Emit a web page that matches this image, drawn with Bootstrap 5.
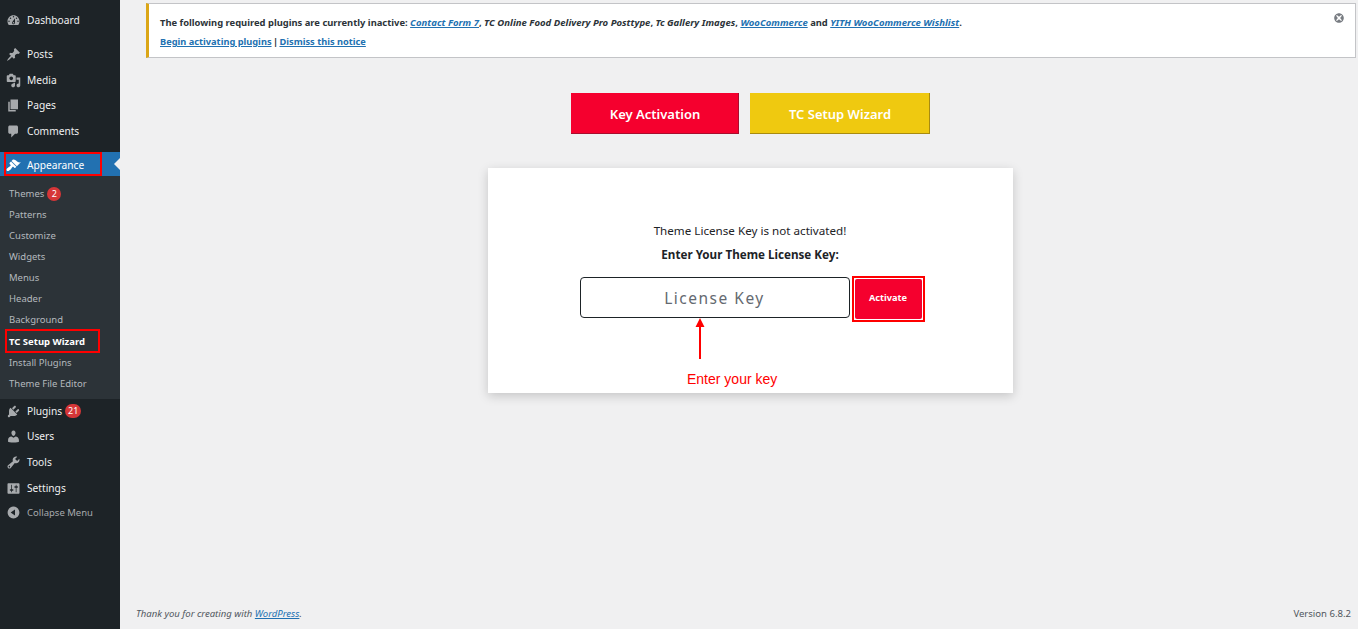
<!DOCTYPE html>
<html lang="en">
<head>
<meta charset="utf-8">
<title>TC Setup Wizard</title>
<link href="https://cdn.jsdelivr.net/npm/bootstrap@5.3.0/dist/css/bootstrap.min.css" rel="stylesheet">
<style>
html,body{height:100%;overflow:hidden}
body{background:#f0f0f1;font-family:"Noto Sans",sans-serif;color:#3c434a;font-size:10px}
.wp-shell{height:629px}
.wp-side{width:120px;flex:none;background:#1d2327;padding-top:8px}
.wp-menu{margin:0;padding:0;list-style:none}
.wp-item{height:25.7px;display:flex;align-items:center;color:#f0f0f1;font-size:10.2px;position:relative;white-space:nowrap}
.wp-item svg{width:15px;height:15px;fill:#a7aaad;margin-left:6px;margin-right:6px;flex:none}
.wp-gap{margin-top:8px}
.wp-current{background:#2271b1;color:#fff;height:24px;margin-top:8px;padding-top:2px}
.wp-current svg{fill:#fff}
.wp-current::after{content:"";position:absolute;right:0;top:6px;border:6px solid transparent;border-right-color:#f0f0f1;border-left:0}
.wp-short{height:24px}
.wp-tall{height:26.6px}
.wp-sub{background:#2c3338;padding:7px 0 5px;list-style:none;margin:0}
.wp-sub li{height:21.1px;display:flex;align-items:center;padding-left:9px;color:#b4b9be;font-size:9.5px;position:relative;white-space:nowrap}
.wp-sub li.wp-on{color:#fff;font-weight:700}
.wp-count{background:#d63638;color:#fff;border-radius:8px;font-size:9px;min-width:14px;height:14px;line-height:14px;text-align:center;padding:0 2px;margin-left:3px}
.wp-count-w{min-width:16px}
.wp-collapse{color:#a7aaad;font-size:9.5px;height:23px}
.wp-collapse svg{fill:#a7aaad}
.red-box{position:absolute;border:2px solid #f00;pointer-events:none}
.box-app{left:4px;top:0;width:98px;height:24px}
.box-tc{left:5px;top:-2px;width:95px;height:24px}
.wp-main{flex:1;min-width:0}
.wp-wrap{margin:3px 2px 0 26px}
.wp-notice{height:55px;background:#fff;border:1px solid #c3c4c7;border-left:3px solid #dba617;padding:0 11px;position:relative;font-size:9.4px;font-weight:700;color:#2c3338}
.wp-notice p{margin:0}
.wp-notice a{color:#2271b1}
.wp-notice .rq{font-style:italic;font-size:9.55px}
.wp-line1{margin-top:7px!important;line-height:24px}
.wp-line2{line-height:14px;font-size:9.25px}
.wp-sep{margin:0 -1px}
.wp-x{position:absolute;right:10px;top:8px;width:12px;height:12px;fill:#787c82}
.wp-center{padding-right:2px}
.tab-btn{width:168px;height:41px;border-radius:0;color:#fff;font-size:13px;font-weight:600;border:0;border-right:1px solid;border-bottom:1px solid;padding:3px 0 0 2px}
.tab-red,.tab-red:hover{background:#f5002e;border-color:#a80d2e;color:#fff}
.tab-yel,.tab-yel:hover{background:#efc910;border-color:#a88b10;color:#fff;width:180px}
.tab-row{margin-top:35px;gap:11px}
.key-card{width:525px;height:225px;margin-top:34px;background:#fff;box-shadow:0 3px 10px rgba(0,0,0,.18);padding-top:52px;position:relative;color:#1d2327;font-size:11.65px}
.key-card p{margin:0;text-align:center;line-height:20px}
.key-card p:first-child{padding-top:1px}
.key-b{font-weight:700;margin-top:4px!important}
.key-row{margin:11px 0 0 92px;gap:2px;align-items:flex-start;height:46px}
.key-input{width:270px;height:41px;margin-top:1px;border:1px solid #1d2327;border-radius:4px;text-align:center;font-size:15.5px;letter-spacing:1.5px;color:#646970;padding:0;background:#fff;box-shadow:none}
.key-input::placeholder{color:#646970;opacity:1}
.key-act{border:2px solid #f00;padding:1px;width:73px;height:46px}
.key-act .btn{width:100%;height:100%;background:#f5002e;color:#fff;font-size:9.2px;font-weight:700;border:0;border-radius:2px;padding:0 0 2px}
.key-arrow{position:absolute;left:206px;top:150px;width:12px;height:41px}
.key-label{position:absolute;left:199.500px;top:202px;font-family:"Liberation Sans",sans-serif;color:#f00;font-size:14px;line-height:18px}
.wp-foot{height:30px;padding:0 7px 0 16px;font-size:9.55px;color:#50575e}
.wp-foot a{color:#2271b1}
</style>
</head>
<body>
<div class="wp-shell d-flex">
  <aside class="wp-side">
    <ul class="wp-menu">
      <li class="wp-item"><svg viewBox="0 0 20 20"><path d="M3.76 16h12.48c1.1-1.37 1.76-3.11 1.76-5 0-4.42-3.58-8-8-8s-8 3.58-8 8c0 1.89.66 3.63 1.76 5zM10 4c.55 0 1 .45 1 1s-.45 1-1 1-1-.45-1-1 .45-1 1-1zM6 6c.55 0 1 .45 1 1s-.45 1-1 1-1-.45-1-1 .45-1 1-1zm8 0c.55 0 1 .45 1 1s-.45 1-1 1-1-.45-1-1 .45-1 1-1zm-5.37 5.55L12 7v6c0 1.1-.9 2-2 2s-2-.9-2-2c0-.57.24-1.08.63-1.45zM4 10c.55 0 1 .45 1 1s-.45 1-1 1-1-.45-1-1 .45-1 1-1zm12 0c.55 0 1 .45 1 1s-.45 1-1 1-1-.45-1-1 .45-1 1-1zm-5 3c0-.55-.45-1-1-1s-1 .45-1 1 .45 1 1 1 1-.45 1-1z"/></svg>Dashboard</li>
      <li class="wp-item wp-gap"><svg viewBox="0 0 20 20"><path d="M10.44 3.02l1.82-1.82 6.36 6.35-1.83 1.82c-1.05-.68-2.48-.57-3.41.36l-.75.75c-.92.93-1.04 2.35-.35 3.41l-1.83 1.82-2.41-2.41-2.8 2.79c-.42.42-3.38 2.71-3.8 2.29s1.86-3.39 2.28-3.81l2.79-2.79L4.1 9.36l1.83-1.82c1.05.69 2.48.57 3.4-.36l.75-.75c.93-.92 1.05-2.35.36-3.41z"/></svg>Posts</li>
      <li class="wp-item"><svg viewBox="0 0 20 20"><path d="M13 11V4c0-.55-.45-1-1-1h-1.67L9 1H5L3.67 3H2c-.55 0-1 .45-1 1v7c0 .55.45 1 1 1h10c.55 0 1-.45 1-1zM7 4.5c1.38 0 2.5 1.12 2.5 2.5S8.38 9.5 7 9.5 4.5 8.38 4.5 7 5.62 4.5 7 4.5zM14 6h5v10.5c0 1.38-1.12 2.5-2.5 2.5S14 17.88 14 16.5s1.12-2.5 2.5-2.5c.17 0 .34.02.5.05V9h-3V6zm-4 8.05V13h2v3.5c0 1.38-1.12 2.5-2.5 2.5S7 17.88 7 16.5 8.12 14 9.5 14c.17 0 .34.02.5.05z"/></svg>Media</li>
      <li class="wp-item"><svg viewBox="0 0 20 20"><path d="M6 15V2h10v13H6zm-1 1h8v2H3V5h2v11z"/></svg>Pages</li>
      <li class="wp-item"><svg viewBox="0 0 20 20"><path d="M5 2h9c1.1 0 2 .9 2 2v7c0 1.1-.9 2-2 2h-2l-5 5v-5H5c-1.1 0-2-.9-2-2V4c0-1.1.9-2 2-2z"/></svg>Comments</li>
      <li class="wp-item wp-current"><svg viewBox="0 0 20 20"><path d="M14.48 11.06L7.41 3.99l1.5-1.5c.5-.56 2.3-.47 3.51.32 1.21.8 1.43 1.28 2.91 2.1 1.18.64 2.45 1.26 4.45.85zm-.71.71L6.7 4.7 4.93 6.47c-.39.39-.39 1.02 0 1.41l1.06 1.06c.39.39.39 1.03 0 1.42-.6.6-1.43 1.11-2.21 1.69-.35.26-.7.53-1.01.84C1.43 13.23 0 15 1 17c1.99 1 3.77-.43 5.1-1.77.31-.31.58-.66.84-1.01.58-.78 1.09-1.61 1.69-2.21.39-.39 1.02-.39 1.41 0l1.06 1.06c.39.39 1.02.39 1.41 0z"/></svg>Appearance<span class="red-box box-app"></span></li>
    </ul>
    <ul class="wp-sub">
      <li>Themes<span class="wp-count">2</span></li>
      <li>Patterns</li>
      <li>Customize</li>
      <li>Widgets</li>
      <li>Menus</li>
      <li>Header</li>
      <li>Background</li>
      <li class="wp-on">TC Setup Wizard<span class="red-box box-tc"></span></li>
      <li>Install Plugins</li>
      <li>Theme File Editor</li>
    </ul>
    <ul class="wp-menu">
      <li class="wp-item wp-short"><svg viewBox="0 0 20 20"><path d="M13.11 4.36L9.87 7.6 8 5.73l3.24-3.24c.35-.34 1.05-.2 1.56.32.52.51.66 1.21.31 1.55zm-8 1.77l.91-1.12 9.01 9.01-1.19.84c-.71.71-2.63 1.16-3.82 1.16H6.14L4.9 17.26c-.59.59-1.54.59-2.12 0-.59-.58-.59-1.53 0-2.12l1.24-1.24v-3.88c0-1.13.4-3.19 1.09-3.89zm7.26 3.97l3.24-3.24c.34-.35 1.04-.21 1.55.31.52.51.66 1.21.31 1.55l-3.24 3.25z"/></svg>Plugins<span class="wp-count wp-count-w">21</span></li>
      <li class="wp-item wp-tall"><svg viewBox="0 0 20 20"><path d="M10 9.25c-2.27 0-2.73-3.44-2.73-3.44C7 4.02 7.82 2 9.97 2c2.16 0 2.98 2.02 2.71 3.81 0 0-.41 3.44-2.68 3.44zm0 2.57L12.72 10c2.39 0 4.52 2.33 4.52 4.53v2.49s-3.65 1.13-7.24 1.13c-3.65 0-7.24-1.13-7.24-1.13v-2.49c0-2.25 1.94-4.48 4.47-4.48z"/></svg>Users</li>
      <li class="wp-item"><svg viewBox="0 0 20 20"><path d="M16.68 9.77c-1.34 1.34-3.3 1.67-4.95.99l-5.41 6.52c-.99.99-2.59.99-3.58 0s-.99-2.59 0-3.57l6.52-5.42c-.68-1.65-.35-3.61.99-4.95 1.28-1.28 3.12-1.62 4.72-1.06l-2.89 2.89 2.82 2.82 2.86-2.87c.53 1.58.18 3.39-1.08 4.65zM3.81 16.21c.4.39 1.04.39 1.43 0 .4-.4.4-1.04 0-1.43-.39-.4-1.03-.4-1.43 0-.39.39-.39 1.03 0 1.43z"/></svg>Tools</li>
      <li class="wp-item"><svg viewBox="0 0 20 20"><path d="M18 16V4c0-.55-.45-1-1-1H3c-.55 0-1 .45-1 1v12c0 .55.45 1 1 1h14c.55 0 1-.45 1-1zM8 11h1c.55 0 1 .45 1 1s-.45 1-1 1H8v1.5c0 .28-.22.5-.5.5s-.5-.22-.5-.5V13H6c-.55 0-1-.45-1-1s.45-1 1-1h1V5.5c0-.28.22-.5.5-.5s.5.22.5.5V11zm5-2h-1c-.55 0-1-.45-1-1s.45-1 1-1h1V5.5c0-.28.22-.5.5-.5s.5.22.5.5V7h1c.55 0 1 .45 1 1s-.45 1-1 1h-1v5.5c0 .28-.22.5-.5.5s-.5-.22-.5-.5V9z"/></svg>Settings</li>
      <li class="wp-item wp-collapse"><svg viewBox="0 0 20 20"><path d="M10 2.16c4.33 0 7.84 3.51 7.84 7.84s-3.51 7.84-7.84 7.84S2.16 14.33 2.16 10 5.71 2.16 10 2.16zm2 11.72V6.12L6.18 9.97z"/></svg>Collapse Menu</li>
    </ul>
  </aside>
  <main class="wp-main d-flex flex-column">
    <div class="wp-wrap flex-grow-1">
      <div class="wp-notice">
        <p class="wp-line1">The following required plugins are currently inactive: <a href="#" class="rq">Contact Form 7</a>, <span class="rq">TC Online Food Delivery Pro Posttype</span>, <span class="rq">Tc Gallery Images</span>, <a href="#" class="rq">WooCommerce</a> and <a href="#" class="rq">YITH WooCommerce Wishlist</a>.</p>
        <p class="wp-line2"><a href="#">Begin activating plugins</a> <span class="wp-sep">|</span> <a href="#">Dismiss this notice</a></p>
        <svg class="wp-x" viewBox="0 0 20 20"><path d="M10 2c4.42 0 8 3.58 8 8s-3.58 8-8 8-8-3.58-8-8 3.58-8 8-8zm3.6 3.2L10 8.1 6.4 5.2 5.2 6.4 8.1 10l-2.9 3.6 1.2 1.2 3.6-2.9 3.6 2.9 1.2-1.2-2.9-3.6 2.9-3.6z"/></svg>
      </div>
      <div class="wp-center">
        <div class="d-flex justify-content-center tab-row">
          <button class="btn tab-btn tab-red" type="button">Key Activation</button>
          <button class="btn tab-btn tab-yel" type="button">TC Setup Wizard</button>
        </div>
        <div class="key-card mx-auto">
          <p>Theme License Key is not activated!</p>
          <p class="key-b">Enter Your Theme License Key:</p>
          <div class="d-flex key-row">
            <input class="form-control key-input" type="text" placeholder="License Key">
            <div class="key-act"><button class="btn" type="button">Activate</button></div>
          </div>
          <svg class="key-arrow" viewBox="0 0 12 41"><path d="M6 0l4.500 9h-3.500v32h-2v-32h-3.500z" fill="#f00"/></svg>
          <span class="key-label">Enter your key</span>
        </div>
      </div>
    </div>
    <footer class="wp-foot d-flex justify-content-between align-items-center">
      <em>Thank you for creating with <a href="#">WordPress</a>.</em>
      <span>Version 6.8.2</span>
    </footer>
  </main>
</div>
<script src="https://cdn.jsdelivr.net/npm/bootstrap@5.3.0/dist/js/bootstrap.bundle.min.js"></script>
</body>
</html>
